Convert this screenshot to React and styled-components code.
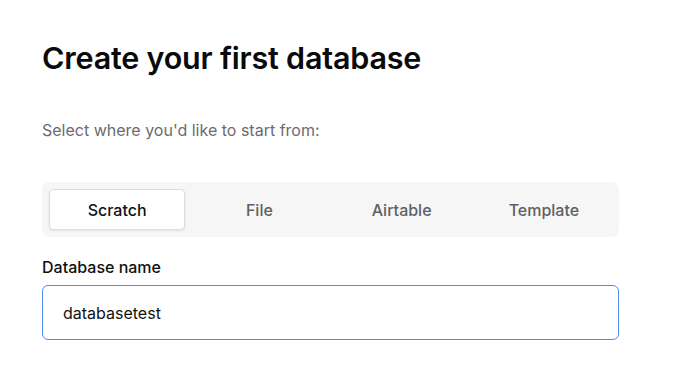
import styled, { createGlobalStyle } from 'styled-components'

const GlobalStyle = createGlobalStyle`
    body {
        margin: 0;
        background-color: #ffffff;
        font-family: 'Inter', sans-serif;
    }
`

const Page = styled.main`
    width: 577px;
    padding: 39px 42px;
    display: flex;
    flex-direction: column;
`

const Title = styled.h1`
    margin: 0;
    font-size: 30.5px;
    font-weight: 600;
    line-height: 38px;
    color: #0a0a0a;
    letter-spacing: -0.2px;
`

const Subtitle = styled.p`
    margin: 43px 0 0 0;
    font-size: 16px;
    line-height: 20px;
    color: #6b6b70;
`

const Tabs = styled.div`
    margin-top: 42px;
    padding: 7px;
    display: grid;
    grid-template-columns: repeat(4, 1fr);
    gap: 6px;
    background-color: #f6f6f6;
    border-radius: 8px;
`

const Tab = styled.button`
    height: 41px;
    border: 1px solid ${props => props.active ? '#dcdcdc' : 'transparent'};
    border-radius: 4px;
    background-color: ${props => props.active ? '#ffffff' : 'transparent'};
    box-shadow: ${props => props.active ? '0 1px 2px rgba(0, 0, 0, 0.08)' : 'none'};
    font-family: 'Inter', sans-serif;
    font-size: 16px;
    font-weight: 500;
    color: ${props => props.active ? '#111111' : '#606064'};
    cursor: pointer;
`

const Field = styled.div`
    margin-top: 20px;
    display: flex;
    flex-direction: column;
    gap: 8px;
`

const Label = styled.label`
    font-size: 16px;
    font-weight: 500;
    line-height: 20px;
    color: #111111;
`

const Input = styled.input`
    box-sizing: border-box;
    width: 100%;
    height: 55px;
    padding: 0 20px;
    border: 1px solid #4d8fe8;
    border-radius: 6px;
    outline: none;
    font-family: 'Inter', sans-serif;
    font-size: 16px;
    color: #111111;
`

const tabs = ['Scratch', 'File', 'Airtable', 'Template']

function App() {
    return (
        <>
            <GlobalStyle />
            <Page>
                <Title>Create your first database</Title>
                <Subtitle>Select where you'd like to start from:</Subtitle>
                <Tabs>
                    {tabs.map((tab, i) => (
                        <Tab key={tab} active={i === 0}>{tab}</Tab>
                    ))}
                </Tabs>
                <Field>
                    <Label htmlFor="db-name">Database name</Label>
                    <Input id="db-name" defaultValue="databasetest" />
                </Field>
            </Page>
        </>
    )
}

export default App
